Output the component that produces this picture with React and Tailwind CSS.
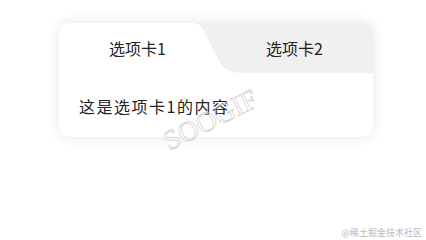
import React, { useState } from "react";

export default function App() {
  const [active] = useState(0);
  return (
    <div
      className="relative w-[426px] h-[240px] bg-white overflow-hidden"
      style={{ fontFamily: '"Noto Sans CJK SC", "Noto Sans", sans-serif' }}
    >
      <div className="pt-[23px] pl-[59px]">
        <div className="relative w-[314px] rounded-[10px] bg-white shadow-[0_0_14px_rgba(0,0,0,0.1)] overflow-hidden">
          <div className="grid grid-cols-2 h-[50px] bg-[#f0f0f0]">
            <div className="relative flex items-center justify-center bg-white">
              <span className="relative z-10 text-[16px] text-[#222]">选项卡1</span>
              <svg
                className="absolute top-0 left-[131px] z-0"
                width="60"
                height="50"
                viewBox="0 0 60 50"
              >
                <rect x="0" y="0" width="60" height="50" fill="#f0f0f0" />
                <path d="M0,0 H3 C10,0 13,6 16,12 L27,34 C32,45 38,50 54,50 H0 Z" fill="#ffffff" />
              </svg>
            </div>
            <div className="relative z-10 flex items-center justify-center">
              <span className="text-[16px] text-[#222]">选项卡2</span>
            </div>
          </div>
          <div className="h-[64px] pl-[20px] pt-[21px]">
            <p className="text-[16px] leading-[24px] text-[#222] tracking-[1.5px]">这是选项卡1的内容</p>
          </div>
        </div>
      </div>
      <div
        className="absolute left-[160px] top-[106px] rotate-[-27deg] text-[28px] leading-none text-transparent [-webkit-text-stroke:0.7px_#cfcfcf] select-none"
        style={{ fontFamily: '"Liberation Serif", serif' }}
      >
        SOOGIF
      </div>
      <div className="absolute right-[4px] bottom-[3px] text-[9px] leading-none text-[#b8b8b8]">
        @稀土掘金技术社区
      </div>
    </div>
  );
}
